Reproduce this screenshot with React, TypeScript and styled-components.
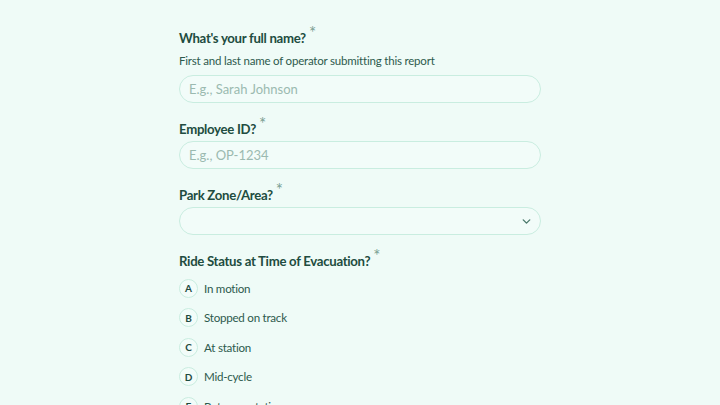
import styled, { createGlobalStyle } from "styled-components";

const GlobalStyle = createGlobalStyle`
  html, body {
    margin: 0;
    padding: 0;
    background: #effbf7;
    font-family: "Lato", "Noto Sans", sans-serif;
    color: #1e4a3f;
  }
  * {
    box-sizing: border-box;
  }
`;

const Page = styled.div`
  height: 405px;
  overflow: hidden;
  display: flex;
  justify-content: center;
`;

const Form = styled.form`
  width: 362px;
  padding-top: 28px;
  display: flex;
  flex-direction: column;
`;

const Field = styled.div`
  display: flex;
  flex-direction: column;
  margin-bottom: 16px;
`;

const Label = styled.label`
  font-size: 13.2px;
  font-weight: 700;
  letter-spacing: -0.3px;
  line-height: 18px;
  height: 18px;
  color: #214c40;
  margin-bottom: 4px;
`;

const Required = styled.span`
  position: relative;
  top: -4px;
  color: #7a9f93;
  font-size: 17px;
  font-weight: 400;
  margin-left: 3px;
`;

const Hint = styled.div`
  font-size: 11.5px;
  letter-spacing: -0.2px;
  line-height: 16px;
  color: #2d5a4d;
  margin-top: 3px;
  margin-bottom: 6px;
`;

const Input = styled.input`
  height: 28px;
  width: 100%;
  border: 1.5px solid #c9ede0;
  border-radius: 14px;
  background: #f2fcf9;
  padding: 0 9px;
  font-family: inherit;
  font-size: 13px;
  color: #1e4a3f;
  outline: none;
  &::placeholder {
    color: #9bbab0;
  }
`;

const Select = styled.div`
  height: 28px;
  width: 100%;
  border: 1.5px solid #c9ede0;
  border-radius: 14px;
  background: #f2fcf9;
  display: flex;
  align-items: center;
  justify-content: flex-end;
  padding-right: 7px;
  color: #4c7a6c;
`;

const Options = styled.div`
  display: flex;
  flex-direction: column;
  gap: 10.5px;
  margin-top: 5.5px;
`;

const Option = styled.div`
  display: flex;
  align-items: center;
  gap: 6px;
  font-size: 11.6px;
  letter-spacing: -0.25px;
  color: #2d5a4d;
`;

const Badge = styled.span`
  width: 19px;
  height: 19px;
  flex-shrink: 0;
  border-radius: 50%;
  border: 1.5px solid #c9ede0;
  background: #f2fcf9;
  display: flex;
  align-items: center;
  justify-content: center;
  font-size: 10px;
  font-weight: 700;
  letter-spacing: 0;
  color: #1e4a3f;
`;

const options = [
  { key: "A", label: "In motion" },
  { key: "B", label: "Stopped on track" },
  { key: "C", label: "At station" },
  { key: "D", label: "Mid-cycle" },
  { key: "E", label: "Between stations" },
];

function App() {
  return (
    <>
      <GlobalStyle />
      <Page>
        <Form>
          <Field>
            <Label>
              What's your full name?<Required>*</Required>
            </Label>
            <Hint>First and last name of operator submitting this report</Hint>
            <Input placeholder="E.g., Sarah Johnson" />
          </Field>
          <Field>
            <Label>
              Employee ID?<Required>*</Required>
            </Label>
            <Input placeholder="E.g., OP-1234" />
          </Field>
          <Field>
            <Label>
              Park Zone/Area?<Required>*</Required>
            </Label>
            <Select>
              <svg width="13" height="13" viewBox="0 0 24 24" fill="none" stroke="currentColor" strokeWidth="2.6" strokeLinecap="round" strokeLinejoin="round">
                <path d="m6 9 6 6 6-6" />
              </svg>
            </Select>
          </Field>
          <Field>
            <Label>
              Ride Status at Time of Evacuation?<Required>*</Required>
            </Label>
            <Options>
              {options.map((o) => (
                <Option key={o.key}>
                  <Badge>{o.key}</Badge>
                  {o.label}
                </Option>
              ))}
            </Options>
          </Field>
        </Form>
      </Page>
    </>
  );
}

export default App;
